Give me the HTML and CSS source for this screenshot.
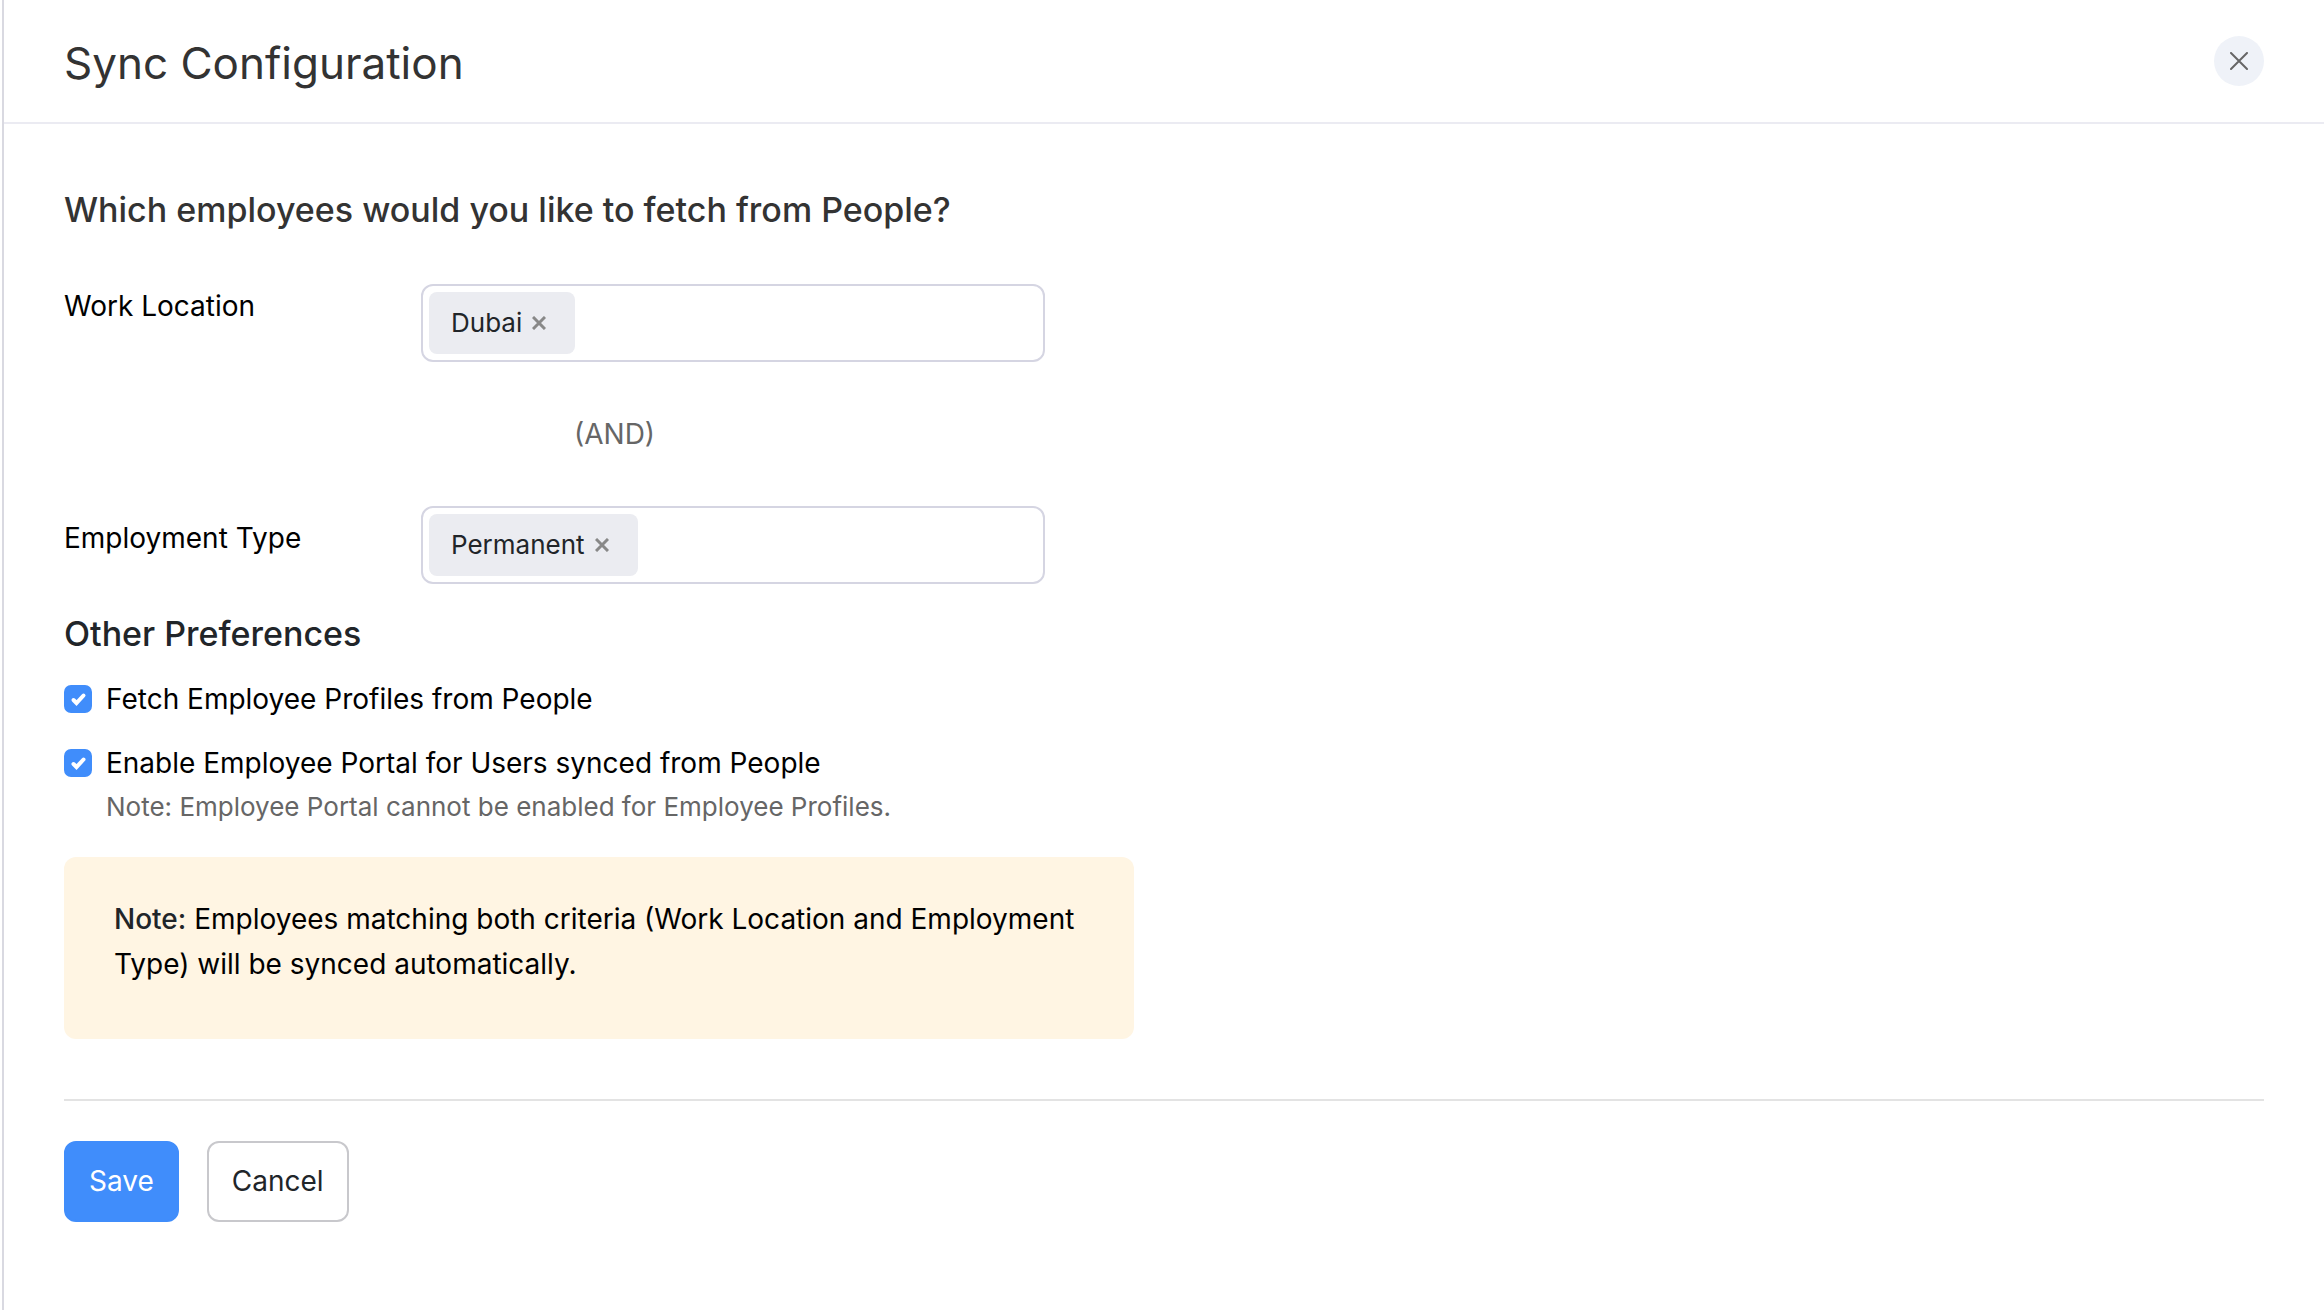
FILE: index.html
```html
<!DOCTYPE html>
<html lang="en">
<head>
  <meta charset="utf-8">
  <meta name="viewport" content="width=device-width, initial-scale=1">
  <title>Sync Configuration</title>
  <link rel="stylesheet" href="styles.css">
</head>
<body>
  <main class="panel">
    <header class="panel-header">
      <h1 class="panel-title">Sync Configuration</h1>
      <button type="button" class="close-button" aria-label="Close">
        <svg class="close-icon" viewBox="0 0 18 18" aria-hidden="true"><path d="M1 1l16 16M17 1L1 17"/></svg>
      </button>
    </header>

    <form class="panel-body">
      <h2 class="section-title">Which employees would you like to fetch from People?</h2>

      <div class="criteria">
        <div class="field">
          <label class="field-label" for="work-location">Work Location</label>
          <div class="multi-select">
            <span class="tag">Dubai
              <button type="button" class="tag-remove" aria-label="Remove Dubai">
                <svg class="tag-icon" viewBox="0 0 14 14" aria-hidden="true"><path d="M1 1l12 12M13 1L1 13"/></svg>
              </button>
            </span>
            <input class="tag-input" id="work-location" type="text">
          </div>
        </div>

        <div class="field">
          <span class="operator">(AND)</span>
        </div>

        <div class="field">
          <label class="field-label field-label-lower" for="employment-type">Employment Type</label>
          <div class="multi-select">
            <span class="tag">Permanent
              <button type="button" class="tag-remove" aria-label="Remove Permanent">
                <svg class="tag-icon" viewBox="0 0 14 14" aria-hidden="true"><path d="M1 1l12 12M13 1L1 13"/></svg>
              </button>
            </span>
            <input class="tag-input" id="employment-type" type="text">
          </div>
        </div>
      </div>

      <h2 class="section-title preferences-title">Other Preferences</h2>

      <div class="preferences">
        <div class="preference">
          <span class="checkbox">
            <input class="checkbox-input" id="fetch-profiles" type="checkbox" checked>
            <svg class="checkbox-mark" viewBox="0 0 28 28" aria-hidden="true"><path d="M9.500 15l3 3 7-7.500"/></svg>
          </span>
          <label for="fetch-profiles">Fetch Employee Profiles from People</label>
        </div>
        <div class="preference">
          <span class="checkbox">
            <input class="checkbox-input" id="enable-portal" type="checkbox" checked aria-describedby="portal-hint">
            <svg class="checkbox-mark" viewBox="0 0 28 28" aria-hidden="true"><path d="M9.500 15l3 3 7-7.500"/></svg>
          </span>
          <label for="enable-portal">Enable Employee Portal for Users synced from People</label>
          <p class="hint" id="portal-hint">Note: Employee Portal cannot be enabled for Employee Profiles.</p>
        </div>
      </div>

      <p class="notice"><strong class="notice-label">Note:</strong> Employees matching both criteria (Work Location and Employment Type) will be synced automatically.</p>

      <footer class="actions">
        <button type="submit" class="button button-primary">Save</button>
        <button type="button" class="button">Cancel</button>
      </footer>
    </form>
  </main>
</body>
</html>
```

FILE: styles.css
```css
* {
  box-sizing: border-box;
}

body {
  margin: 0;
  background: #fff;
  color: #000;
  font-family: Inter, "Liberation Sans", sans-serif;
  font-size: 28px;
  line-height: 44px;
}

h1,
h2,
p {
  margin: 0;
}

button,
input {
  font: inherit;
}

.panel {
  min-height: 100vh;
  margin-left: 2px;
  border-left: 2px solid #d9d9e1;
}

.panel-header {
  display: flex;
  align-items: flex-start;
  justify-content: space-between;
  padding: 36px 60px 32px;
  border-bottom: 2px solid #ebebf2;
}

.panel-title {
  color: #333;
  font-size: 44px;
  font-weight: 400;
  line-height: 54px;
}

.close-button {
  display: grid;
  place-items: center;
  width: 50px;
  height: 50px;
  padding: 0;
  border: 0;
  border-radius: 50%;
  background: #eff2f8;
}

.close-icon,
.tag-icon,
.checkbox-mark {
  display: block;
  fill: none;
  stroke: #666;
  stroke-width: 2;
  stroke-linecap: round;
}

.close-icon {
  width: 18px;
  height: 18px;
}

.panel-body {
  padding: 64px 60px;
}

.section-title {
  color: #333;
  font-size: 34px;
  font-weight: 500;
}

.criteria {
  display: grid;
  gap: 50px;
  margin-top: 52px;
}

.field {
  display: grid;
  grid-template-columns: 357px minmax(0, 624px);
}

.field-label-lower {
  padding-top: 10px;
}

.operator {
  grid-column: 2;
  padding-left: 153px;
  color: #666;
}

.multi-select {
  display: flex;
  padding: 6px;
  border: 2px solid #d5d5e2;
  border-radius: 12px;
}

.tag {
  display: flex;
  align-items: center;
  gap: 10px;
  padding: 9px 29px 9px 22px;
  border-radius: 8px;
  background: #ebecf1;
  color: #212529;
  font-size: 26px;
}

.tag-remove {
  padding: 0;
  border: 0;
  background: none;
}

.tag-icon {
  width: 14px;
  height: 14px;
  stroke: #888;
  stroke-width: 3;
  stroke-linecap: butt;
}

.tag-input {
  flex: 1;
  min-width: 0;
  padding: 0 12px;
  border: 0;
  outline: 0;
  background: none;
}

.preferences-title {
  margin-top: 28px;
  color: #212529;
}

.preferences {
  display: grid;
  gap: 20px;
  margin-top: 21px;
}

.preference {
  display: grid;
  grid-template-columns: 28px 1fr;
  column-gap: 14px;
  align-items: center;
}

.checkbox {
  display: grid;
}

.checkbox-input,
.checkbox-mark {
  grid-area: 1 / 1;
  width: 28px;
  height: 28px;
}

.checkbox-input {
  appearance: none;
  margin: 0;
  border: 2px solid #d5d5e2;
  border-radius: 7px;
}

.checkbox-input:checked {
  border-color: #408dfb;
  background: #408dfb;
}

.checkbox-mark {
  stroke: #fff;
  stroke-width: 4;
  pointer-events: none;
}

.hint {
  grid-column: 2;
  color: #666;
  font-size: 26px;
}

.notice {
  max-width: 1070px;
  margin-top: 28px;
  padding: 40px 50px 52px;
  border-radius: 12px;
  background: #fff5e3;
  line-height: 45px;
}

.notice-label {
  color: #212529;
  font-weight: 500;
}

.actions {
  display: flex;
  gap: 28px;
  margin-top: 60px;
  padding-top: 40px;
  border-top: 2px solid #e3e3e3;
}

.button {
  padding: 16px 23px;
  border: 2px solid #c8c8cc;
  border-radius: 12px;
  background: #fff;
  color: #212529;
  line-height: 45px;
}

.button-primary {
  border-color: #408dfb;
  background: #408dfb;
  color: #fff;
}
```
